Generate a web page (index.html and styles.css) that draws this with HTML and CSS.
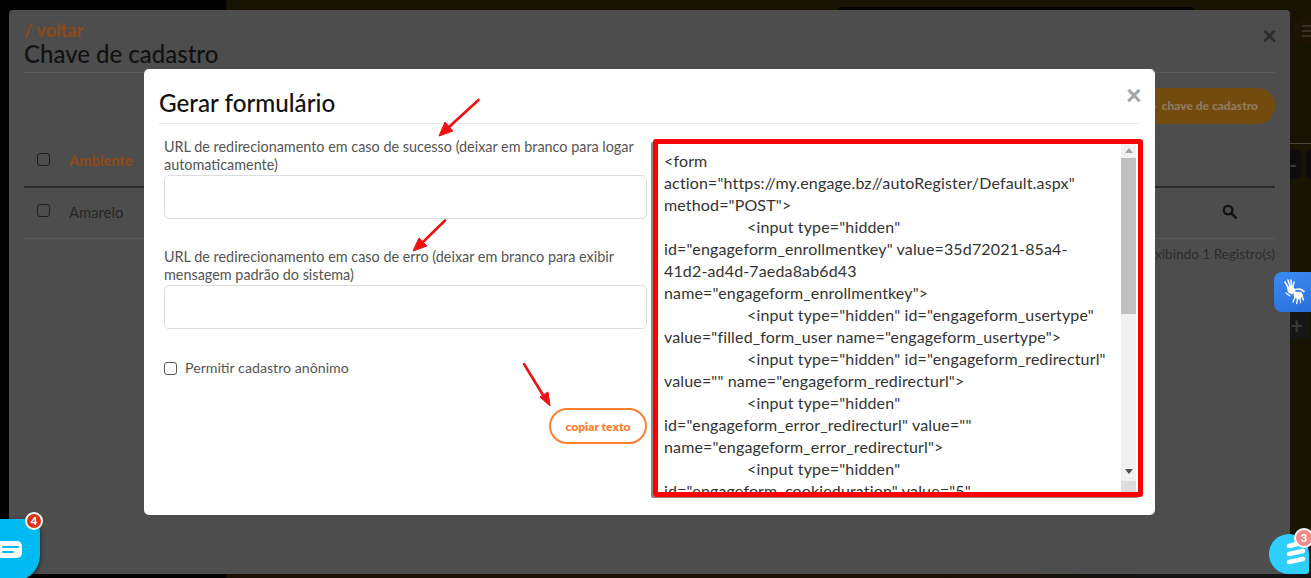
FILE: index.html
```html
<!DOCTYPE html>
<html lang="pt-BR">
<head>
<meta charset="utf-8">
<title>Gerar formulário</title>
<link rel="stylesheet" href="styles.css">
</head>
<body>
<div class="backdrop">
  <div class="bg-black-left"></div>
  <div class="bg-top-shape"></div>
  <div class="bg-bottom"></div>
  <div class="bg-menu"><span></span><span></span><span></span></div>
  <div class="bg-line"></div>
  <div class="bg-btn bg-btn-a">-</div>
  <div class="bg-btn bg-btn-b"></div>
  <div class="bg-btn bg-btn-c">+</div>
</div>

<section class="page-modal">
  <a class="back">/ voltar</a>
  <h1 class="page-title">Chave de cadastro</h1>
  <span class="page-close">&times;</span>
  <div class="toolbar">
    <span class="add-btn"><b class="plus">+</b> chave de cadastro</span>
  </div>
  <div class="row row-head">
    <span class="box"></span><span class="cell-head">Ambiente</span>
  </div>
  <div class="row row-body">
    <span class="box"></span><span class="cell">Amarelo</span>
    <svg class="search" viewBox="0 0 16 16" width="15" height="15"><circle cx="6.5" cy="6.5" r="4.6" fill="none" stroke="#111" stroke-width="2.4"/><path d="M10 10l4.6 4.6" stroke="#111" stroke-width="2.8" stroke-linecap="round"/></svg>
  </div>
  <div class="count">Exibindo 1 Registro(s)</div>
</section>

<section class="dialog">
  <header class="dialog-head">
    <h2 class="dialog-title">Gerar formulário</h2>
    <span class="dialog-close">&times;</span>
  </header>
  <div class="dialog-body">
    <form class="form-col">
      <label class="field-label">URL de redirecionamento em caso de sucesso (deixar em branco para logar automaticamente)</label>
      <input class="field-input" type="text">
      <label class="field-label second">URL de redirecionamento em caso de erro (deixar em branco para exibir mensagem padrão do sistema)</label>
      <input class="field-input" type="text">
      <label class="check-line"><span class="box light"></span>Permitir cadastro anônimo</label>
      <div class="form-actions"><button class="copy-btn" type="button">copiar texto</button></div>
    </form>
    <div class="code-box">
      <div class="code">
        <div>&lt;form</div>
        <div>action="https://my.engage.bz//autoRegister/Default.aspx"</div>
        <div>method="POST"&gt;</div>
        <div class="in">&lt;input type="hidden"</div>
        <div>id="engageform_enrollmentkey" value=35d72021-85a4-</div>
        <div>41d2-ad4d-7aeda8ab6d43</div>
        <div>name="engageform_enrollmentkey"&gt;</div>
        <div class="in">&lt;input type="hidden" id="engageform_usertype"</div>
        <div>value="filled_form_user name="engageform_usertype"&gt;</div>
        <div class="in">&lt;input type="hidden" id="engageform_redirecturl"</div>
        <div>value="" name="engageform_redirecturl"&gt;</div>
        <div class="in">&lt;input type="hidden"</div>
        <div>id="engageform_error_redirecturl" value=""</div>
        <div>name="engageform_error_redirecturl"&gt;</div>
        <div class="in">&lt;input type="hidden"</div>
        <div>id="engageform_cookieduration" value="5"</div>
      </div>
      <div class="scrollbar">
        <span class="arrow-up"></span>
        <span class="thumb"></span>
        <span class="track"></span>
        <span class="arrow-down"></span>
        <span class="resizer"></span>
      </div>
    </div>
  </div>
</section>

<svg class="arrows" width="1311" height="578" viewBox="0 0 1311 578">
  <g fill="#f01010" stroke="#f01010">
    <path d="M478.500 100L449 127" stroke-width="2.600" stroke-linecap="round"/>
    <path d="M439 136L445 122L453 131Z" stroke-width="1"/>
    <path d="M445 220.500L423 242" stroke-width="2.600" stroke-linecap="round"/>
    <path d="M413 251L419 238L427 246Z" stroke-width="1"/>
    <path d="M524 364L543 395" stroke-width="2.600" stroke-linecap="round"/>
    <path d="M550 406L540 397L548 392Z" stroke-width="1"/>
  </g>
</svg>

<div class="chat-left">
  <svg width="30" height="20" viewBox="0 0 30 20"><rect x="-6" y="1" width="28" height="17" rx="5" fill="#fff"/><path d="M3 7h15M3 12h10" stroke="#00bbf2" stroke-width="2" stroke-linecap="round"/></svg>
  <span class="badge badge-red">4</span>
</div>

<div class="chat-right">
  <svg width="24" height="26" viewBox="0 0 24 26"><g stroke="#fff" stroke-width="4.500" stroke-linecap="round"><path d="M4 5L12 3"/><path d="M4 13L18 10"/><path d="M4 21L18 18"/></g></svg>
  <span class="badge badge-pink">3</span>
</div>

<div class="a11y">
  <svg width="37" height="40" viewBox="0 0 37 40">
    <g fill="none" stroke="#fff" stroke-linecap="round" stroke-linejoin="round">
      <path d="M11 10l3.500 6M14 8l2.200 7M17 8l.5 7M20 10l-1.500 6" stroke-width="1.500"/>
      <path d="M13.500 15l1 5 3.500 2 3-4 -2-2.500z" fill="#fff" stroke-width="1.200"/>
      <path d="M18 19q5-3 9-1.500l3 2" stroke-width="1.600"/>
      <path d="M20 20l7 0.500 1.500 3-4 3.500-4-2z" fill="#fff" stroke-width="1.200"/>
      <path d="M21 25l-2 5M23.500 26l-.7 5.500M26 25.500l.5 5M28 24l1.500 4" stroke-width="1.400"/>
      <path d="M12 21l4 3" stroke-width="1.200"/>
    </g>
  </svg>
</div>
</body>
</html>
```

FILE: styles.css
```css
* { box-sizing: border-box; }
html, body { margin: 0; padding: 0; }
body {
  position: relative;
  width: 1311px;
  height: 578px;
  overflow: hidden;
  background: #181403;
  font-family: "Lato", "Noto Sans", sans-serif;
}

/* dimmed page behind the dialogs */
.backdrop { position: absolute; inset: 0; }
.bg-black-left { position: absolute; left: 0; top: 0; width: 226px; height: 578px; background: #000; }
.bg-top-shape { position: absolute; left: 836px; top: 7px; width: 360px; height: 6px; background: #050505; border-radius: 6px 6px 0 0; }
.bg-bottom { position: absolute; left: 226px; right: 0; top: 574px; height: 4px; background: linear-gradient(90deg, #1a1004 0 65%, #141414 85%); }
.bg-menu { position: absolute; left: 1294px; top: 15px; width: 30px; height: 30px; border-radius: 50%; background: #1e1405; padding: 10px 0 0 8px; display: flex; flex-direction: column; gap: 3px; }
.bg-menu span { display: block; width: 12px; height: 2px; background: #3a3020; }
.bg-line { position: absolute; left: 1290px; right: 0; top: 143px; height: 1px; background: #45453c; }
.bg-btn { position: absolute; background: #0d0d0d; border-radius: 4px; color: #3c3c3c; font-size: 20px; font-weight: 700; line-height: 28px; }
.bg-btn-a { left: 1270px; top: 150px; width: 31px; height: 29px; text-align: right; padding-right: 4px; }
.bg-btn-b { left: 1306px; top: 150px; width: 12px; height: 29px; }
.bg-btn-c { left: 1270px; top: 312px; width: 40px; height: 27px; background: #161616; text-align: right; padding-right: 7px; font-size: 22px; color: #3a3a3a; }

/* outer modal */
.page-modal {
  position: absolute;
  left: 9px; top: 10px;
  width: 1281px; height: 564px;
  background: #4d4d4d;
  border-radius: 4px;
  padding: 10px 15px 0;
  color: #262626;
}
.back { display: block; font-size: 18px; line-height: 20px; font-weight: 900; color: #8a4a1c; }
.page-title { margin: 0; font-size: 24px; line-height: 27px; font-weight: 500; color: #111; height: 33px; border-bottom: 1px solid #5a5a5a; }
.page-close { position: absolute; right: 13px; top: 10px; font-size: 26px; line-height: 30px; font-weight: 900; color: #2c2c2c; }
.toolbar { display: flex; justify-content: flex-end; padding-top: 15px; height: 69px; }
.add-btn { height: 36px; line-height: 36px; padding: 0 17px 0 30px; border-radius: 18px; background: #734b0e; color: #8d7c5f; font-size: 12px; font-weight: 900; }
.plus { margin-right: 2px; }
.row { display: flex; align-items: center; padding-left: 13px; position: relative; }
.row-head { height: 46px; padding-bottom: 10px; border-bottom: 2px solid #2b2b2b; }
.row-body { height: 51px; padding-bottom: 6px; border-bottom: 1px solid #5a5a5a; }
.box { display: block; flex: none; width: 13px; height: 13px; border: 1px solid #1e1e1e; border-radius: 3px; margin-right: 19px; }
.cell-head { font-size: 14.500px; font-weight: 900; color: #8a4a1c; margin-top: 3px; }
.cell { font-size: 14.800px; color: #262626; margin-top: 3px; }
.search { position: absolute; right: 38px; top: 16px; }
.count { text-align: right; font-size: 13.600px; line-height: 30px; color: #2c2c2c; }

/* dialog */
.dialog {
  position: absolute;
  left: 144px; top: 69px;
  width: 1011px; height: 446px;
  background: #fff;
  border-radius: 5px;
  padding: 0 15px;
}
.dialog-head { position: relative; height: 55px; border-bottom: 1px solid #e9e9e9; }
.dialog-title { margin: 0; padding-top: 18px; font-size: 24.200px; line-height: 32px; font-weight: 500; color: #111; }
.dialog-close { position: absolute; right: -2px; top: 10px; font-size: 28px; line-height: 30px; font-weight: 900; color: #a5a5a5; }
.dialog-body { display: flex; align-items: flex-start; padding-top: 15px; }
.form-col { flex: none; width: 483px; margin-left: 5px; margin-top: -1px; display: flex; flex-direction: column; }
.field-label { display: block; font-size: 14.400px; line-height: 18px; color: #555; margin-bottom: 1px; }
.field-label.second { margin-top: 29px; }
.field-input { display: block; width: 100%; height: 44px; border: 1px solid #dcdcdc; border-radius: 5px; background: #fff; margin: 0; }
.check-line { display: flex; align-items: center; margin-top: 32px; font-size: 14.200px; line-height: 14px; color: #555; }
.box.light { border-color: #555; margin-right: 8px; }
.form-actions { display: flex; justify-content: flex-end; margin-top: 33px; }
.copy-btn { width: 98px; height: 36px; padding: 0; border: 2px solid #ff8030; border-radius: 18px; background: #fff; color: #ff8030; font: 800 12px "Lato", "Noto Sans", sans-serif; }

.code-box {
  position: relative;
  flex: none;
  width: 490px; height: 358px;
  margin-left: 6px;
  border: 5px solid #f00;
  border-radius: 3px;
  box-shadow: -3px 2px 0 -1px #8a8a8a;
  overflow: hidden;
  display: flex;
}
.code { flex: 1; min-width: 0; padding: 6px 0 0 6px; font-size: 16px; line-height: 22px; letter-spacing: .15px; color: #333; overflow: hidden; }
.code div { white-space: pre; }
.code .in { padding-left: 83px; }
.scrollbar { position: relative; flex: none; width: 15px; margin-right: 2px; background: #f1f1f1; display: flex; flex-direction: column; align-items: center; }
.arrow-up { flex: none; margin-top: 4px; margin-bottom: 5px; width: 0; height: 0; border: 4px solid transparent; border-top: 0; border-bottom: 5px solid #a3a3a3; }
.thumb { flex: none; width: 100%; height: 156px; background: #c1c1c1; }
.track { flex: 1; }
.arrow-down { flex: none; margin-bottom: 18px; width: 0; height: 0; border: 4px solid transparent; border-bottom: 0; border-top: 5px solid #505050; }
.resizer { position: absolute; left: 0; right: 0; bottom: 0; height: 11px; background: #dcdcdc; }

/* annotation arrows */
.arrows { position: absolute; left: 0; top: 0; pointer-events: none; }

/* floating widgets */
.chat-left {
  position: absolute;
  left: -20px; top: 519px;
  width: 60px; height: 62px;
  background: #00bbf2;
  border-radius: 18px 14px 26px 22px;
  box-shadow: 1px 1px 4px rgba(0,0,0,.4);
  padding: 21px 0 0 20px;
  display: flex;
}
.badge {
  position: absolute;
  width: 18px; height: 18px;
  border-radius: 50%;
  color: #fff;
  text-align: center;
  font-size: 11px;
  line-height: 14px;
  font-weight: 900;
  border: 2px solid #fff;
}
.badge-red { left: 45px; top: -7px; background: #dd3311; }
.chat-right {
  position: absolute;
  left: 1269px; top: 534px;
  width: 40px; height: 40px;
  background: #2dcfff;
  border-radius: 50% 50% 3px 50%;
  padding: 7px 0 0 16px;
}
.badge-pink { left: 25px; top: -6px; width: 20px; height: 20px; line-height: 16px; background: #ee8a8a; }
.a11y {
  position: absolute;
  left: 1274px; top: 272px;
  width: 37px; height: 40px;
  background: linear-gradient(160deg, #3a8cf2, #2a6edb);
  border-radius: 8px 0 0 8px;
}
.a11y svg { display: block; }
```
